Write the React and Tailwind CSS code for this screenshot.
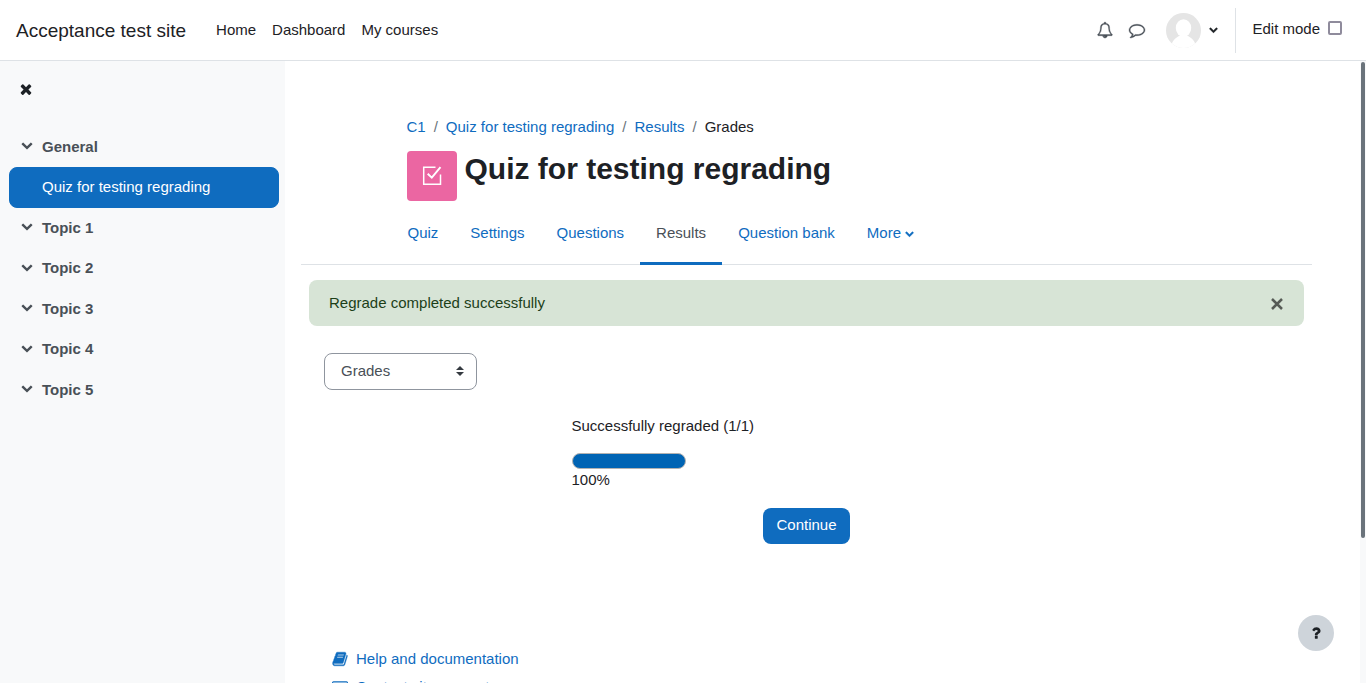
import React from "react";

const ICONS = {
  bell: "M912 1696q0-16-16-16-59 0-101.5-42.5t-42.5-101.5q0-16-16-16t-16 16q0 73 51.5 124.5t124.5 51.5q16 0 16-16zm-666-288h1300q-266-300-266-832 0-51-24-105t-69-103-121.5-80.5-169.5-31.5-169.5 31.5-121.5 80.5-69 103-24 105q0 532-266 832zm1482 0q0 52-38 90t-90 38h-448q0 106-75 181t-181 75-181-75-75-181h-448q-52 0-90-38t-38-90q50-42 91-88t85-119.500 74.500-158.500 50-206 19.500-260q0-152 117-282.500t307-158.500q-8-19-8-39 0-40 28-68t68-28 68 28 28 68q0 20-8 39 190 28 307 158.500t117 282.500q0 139 19.500 260t50 206 74.500 158.500 85 119.500 91 88z",
  comment: "M896 384q-204 0-381.500 69.500t-282 187.500-104.500 255q0 112 71.500 213.500t201.500 175.500l87 50-27 96q-24 91-70 172 152-63 275-171l43-38 57 6q69 8 130 8 204 0 381.500-69.500t282-187.500 104.500-255-104.500-255-282-187.500-381.500-69.500zm896 512q0 174-120 321.500t-326 233-450 85.500q-70 0-145-8-198 175-460 242-49 14-114 22h-5q-15 0-27-10.500t-16-27.500v-1q-3-4-.5-12t2-10 4.500-9.500l6-9 7-8.500 8-9q7-8 31-34.500t34.500-38 31-39.500 32.500-51 27-59 26-76q-157-89-247.500-220t-90.500-281q0-174 120-321.500t326-233 450-85.500 450 85.500 326 233 120 321.500z",
  chevron: "M1683 808l-742 741q-19 19-45 19t-45-19l-742-741q-19-19-19-45.500t19-45.500l166-165q19-19 45-19t45 19l531 531 531-531q19-19 45-19t45 19l166 165q19 19 19 45.500t-19 45.500z",
  times: "M1490 1322q0 40-28 68l-136 136q-28 28-68 28t-68-28l-294-294-294 294q-28 28-68 28t-68-28l-136-136q-28-28-28-68t28-68l294-294-294-294q-28-28-28-68t28-68l136-136q28-28 68-28t68 28l294 294 294-294q28-28 68-28t68 28l136 136q28 28 28 68t-28 68l-294 294 294 294q28 28 28 68z",
  book: "M1703 478q40 57 18 129l-275 906q-19 64-76.500 107.500t-122.500 43.500h-923q-77 0-148.500-53.500t-99.500-131.500q-24-67-2-127 0-4 3-27t4-37q1-8-3-21.500t-3-19.500q2-11 8-21t16.500-23.500 16.500-23.500q23-38 45-91.500t30-91.500q3-10 .5-30t-.5-28q3-11 17-28t17-23q21-36 42-92t25-90q1-9-2.500-32t.5-28q4-13 22-30.500t22-22.500q19-26 42.500-84.500t27.500-96.500q1-8-3-25.500t-2-26.500q2-8 9-18t18-23 17-21q8-12 16.500-30.500t15-35 16-36 19.500-32 26.500-23.500 36-11.500 47.500 5.500l-1 3q38-9 51-9h761q74 0 114 56t18 130l-274 906q-36 119-71.500 153.500t-128.500 34.500h-869q-27 0-38 15-11 16-1 43 24 70 144 70h923q29 0 56-15.500t35-41.500l300-987q7-22 5-57 38 15 59 43zm-1064 2q-4 13 2 22.500t20 9.500h608q13 0 25.500-9.500t16.500-22.500l21-64q4-13-2-22.500t-20-9.500h-608q-13 0-25.500 9.500t-16.500 22.500zm-83 256q-4 13 2 22.500t20 9.500h608q13 0 25.500-9.500t16.500-22.500l21-64q4-13-2-22.500t-20-9.500h-608q-13 0-25.500 9.500t-16.500 22.500z",
  envelope: "M1664 1504v-768q-32 36-69 66-268 206-426 338-51 43-83 67t-86.500 48.500-102.500 24.500h-2q-48 0-102.500-24.500t-86.500-48.500-83-67q-158-132-426-338-37-30-69-66v768q0 13 9.500 22.500t22.500 9.500h1472q13 0 22.500-9.500t9.500-22.500zm0-1051v-24.500l-.5-13-3-12.500-5.500-9-9-7.500-14-2.500h-1472q-13 0-22.500 9.500t-9.500 22.500q0 168 147 284 193 152 401 317 6 5 35 29.500t46 37.500 44.500 31.500 50.500 27.500 43 9h2q20 0 43-9t50.500-27.500 44.500-31.500 46-37.500 35-29.500q208-165 401-317 54-43 100.500-115.500t46.500-131.500zm128-37v1088q0 66-47 113t-113 47h-1472q-66 0-113-47t-47-113v-1088q0-66 47-113t113-47h1472q66 0 113 47t47 113z",
  question: "M1088 1256v240q0 16-12 28t-28 12h-240q-16 0-28-12t-12-28v-240q0-16 12-28t28-12h240q16 0 28 12t12 28zm316-600q0 54-15.500 101t-35 76.500-55 59.500-57.500 43.500-61 35.500q-41 23-68.500 65t-27.500 67q0 17-12 32.500t-28 15.500h-240q-15 0-25.500-18.500t-10.500-37.500v-45q0-83 65-156.500t143-108.500q59-27 84-56t25-76q0-42-46.500-74t-107.500-32q-65 0-108 29-35 25-107 115-13 16-31 16-12 0-25-8l-164-125q-13-10-15.500-25t5.500-28q160-266 464-266 80 0 161 31t146 83 106 127.500 41 158.500z",
};

function Icon({ name, className, weight = 0 }) {
  return (
    <svg
      viewBox="0 0 1792 1792"
      fill="currentColor"
      stroke="currentColor"
      strokeWidth={weight}
      overflow="visible"
      aria-hidden="true"
      className={className}
    >
      <path d={ICONS[name]} />
    </svg>
  );
}

const TOPICS = ["Topic 1", "Topic 2", "Topic 3", "Topic 4", "Topic 5"];
const CRUMBS = ["C1", "Quiz for testing regrading", "Results"];
const TABS = ["Quiz", "Settings", "Questions", "Results", "Question bank"];

function Header() {
  return (
    <header className="flex h-[61px] shrink-0 items-center border-b border-[#dee2e6] bg-white px-4">
      <a href="#" className="mr-[22px] pt-0.5 text-[19px]">Acceptance test site</a>
      <nav aria-label="Site" className="flex">
        {["Home", "Dashboard", "My courses"].map((t) => (
          <a key={t} href="#" className="px-2">{t}</a>
        ))}
      </nav>
      <div className="ml-auto flex items-center">
        <button type="button" aria-label="Notifications" className="px-2 text-[#495057]">
          <Icon name="bell" weight={40} className="size-4" />
        </button>
        <button type="button" aria-label="Messages" className="px-2 text-[#495057]">
          <Icon name="comment" weight={40} className="size-4" />
        </button>
        <button type="button" aria-label="User menu" className="ml-[13px] flex items-center gap-2">
          <svg viewBox="0 0 35 35" aria-hidden="true" className="size-[35px] rounded-full">
            <rect width="35" height="35" fill="#e5e5e5" />
            <ellipse cx="17.500" cy="15" rx="7.700" ry="8.700" fill="#fff" />
            <path d="M4.500 35C6 27 10 24.500 14 22.500h7C25 24.500 29 27 30.500 35z" fill="#fff" />
          </svg>
          <Icon name="chevron" weight={60} className="mb-0.5 size-[9px]" />
        </button>
        <div className="ml-[17px] flex h-[45px] items-center border-l border-[#dee2e6] pr-2 pl-4">
          <label htmlFor="editmode" className="pb-px">Edit mode</label>
          <input
            id="editmode"
            type="checkbox"
            className="mb-1 ml-2 size-[14px] appearance-none rounded-[2px] border-2 border-[#8f8b9c] bg-white checked:bg-[#0f6cbf]"
          />
        </div>
      </div>
    </header>
  );
}

function Section({ title }) {
  return (
    <li className="flex items-center border border-transparent py-2 pl-3 font-bold text-[#495057]">
      <button type="button" aria-label={"Collapse " + title} className="mr-[9px] mb-[3px]">
        <Icon name="chevron" className="size-3" />
      </button>
      <a href="#">{title}</a>
    </li>
  );
}

function Sidebar() {
  return (
    <nav aria-label="Course index" className="w-[285px] shrink-0 overflow-y-auto bg-[#f8f9fa] pr-[6px] pl-2 [scrollbar-width:none]">
      <button type="button" aria-label="Close course index" className="mt-[17px] ml-[10px] flex h-[1.5em] items-center">
        <Icon name="times" className="size-4" />
      </button>
      <ul className="mt-[26px]">
        <Section title="General" />
        <li className="ml-px rounded-lg border border-[#0f6cbf] bg-[#0f6cbf] py-2 pl-8 text-white">
          <a href="#">Quiz for testing regrading</a>
        </li>
        {TOPICS.map((t) => <Section key={t} title={t} />)}
      </ul>
    </nav>
  );
}

export default function App() {
  return (
    <div className="flex h-screen flex-col overflow-hidden bg-white font-['Liberation_Sans',Arial,sans-serif] text-[15px] leading-normal text-[#1d2125]">
      <Header />
      <div className="flex min-h-0 flex-1">
        <Sidebar />
        <main className="min-w-0 flex-1 overflow-y-auto pr-12 pl-4 [scrollbar-width:none]">
          <div className="mx-auto max-w-[800px] pt-[55px]">
            <nav aria-label="Breadcrumb">
              <ol className="flex flex-wrap text-[#0f6cbf]">
                {CRUMBS.map((c) => (
                  <li key={c}>
                    <a href="#">{c}</a>
                    <span className="px-2 text-[#6a737b]">/</span>
                  </li>
                ))}
                <li aria-current="page" className="text-[#1d2125]">Grades</li>
              </ol>
            </nav>
            <div className="mt-3 flex gap-2">
              <div className="flex size-[50px] items-center justify-center rounded bg-[#eb66a2]">
                <svg viewBox="0 0 24 24" fill="none" stroke="#fff" aria-hidden="true" className="size-6">
                  <path d="M15.500 3.200H3.700V20.200H20.500V10.500" strokeWidth="1.500" />
                  <path d="M7.700 9.700L11.800 13.600L20.500 3.200" strokeWidth="1.900" />
                </svg>
              </div>
              <h1 className="text-[30px] leading-9 font-bold">Quiz for testing regrading</h1>
            </div>
          </div>
          <div className="mt-[3px] border-b border-[#dee2e6]">
            <nav aria-label="Quiz navigation" className="mx-auto -mb-px flex max-w-[830px] text-[#0f6cbf]">
              {TABS.map((t) => (
                <a
                  key={t}
                  href="#"
                  className={
                    t === "Results"
                      ? "flex h-[61px] items-center border-b-[3px] border-[#0f6cbf] px-4 pt-0.5 text-[#495057]"
                      : "flex h-[61px] items-center border-b-[3px] border-transparent px-4 pt-0.5"
                  }
                >
                  {t}
                </a>
              ))}
              <button type="button" className="flex h-[61px] items-center gap-1 border-b-[3px] border-transparent px-4 pt-0.5">
                More
                <Icon name="chevron" weight={60} className="size-[9px]" />
              </button>
            </nav>
          </div>
          <div role="alert" className="mx-2 mt-[15px] flex h-[46px] items-center justify-between rounded-lg bg-[#d7e4d6] px-5 pt-0.5 text-[#1c3f19]">
            Regrade completed successfully
            <button type="button" aria-label="Dismiss" className="p-px text-[#565b56]">
              <svg viewBox="0 0 12 12" fill="none" stroke="currentColor" strokeWidth="2.500" aria-hidden="true" className="size-3">
                <path d="M1 1L11 11M11 1L1 11" />
              </svg>
            </button>
          </div>
          <div className="relative mt-[27px] ml-[23px] w-[153px]">
            <select
              aria-label="Report"
              className="block h-[37px] w-full appearance-none rounded-lg border border-[#8f959e] bg-white px-4 text-[#495057]"
            >
              <option>Grades</option>
            </select>
            <svg viewBox="0 0 8 10" fill="#343a40" aria-hidden="true" className="pointer-events-none absolute top-[13px] right-[13px] h-[10px] w-2">
              <path d="M4 0L0 4h8zM4 10L0 6h8z" />
            </svg>
          </div>
          <div className="mx-auto mt-[25px] max-w-[470px]">
            <p>Successfully regraded (1/1)</p>
            <div
              role="progressbar"
              aria-label="Regrade progress"
              aria-valuenow={100}
              className="mt-4 h-4 w-[114px] overflow-hidden rounded-full border border-[#b2b2b2] bg-[#0064b4]"
            />
            <p>100%</p>
          </div>
          <div className="mt-4 flex justify-center">
            <button type="button" className="h-9 rounded-lg bg-[#0f6cbf] px-[13px] text-white">Continue</button>
          </div>
          <footer className="mt-[104px] ml-[31px] flex flex-col items-start gap-[6px] pb-6 text-[#0f6cbf]">
            <a href="#" className="flex items-center gap-2">
              <Icon name="book" weight={40} className="size-4" />
              Help and documentation
            </a>
            <a href="#" className="flex items-center gap-2">
              <Icon name="envelope" className="size-4" />
              Contact site support
            </a>
          </footer>
        </main>
        <div aria-hidden="true" className="w-[6px] shrink-0 bg-[#f8f9fa] px-px pt-px">
          <div className="h-[calc(77%-2px)] rounded-full bg-[#6a737b]" />
        </div>
      </div>
      <button
        type="button"
        aria-label="Show footer"
        className="fixed right-8 bottom-8 flex size-9 items-center justify-center rounded-full bg-[#ced4da]"
      >
        <Icon name="question" className="size-4" />
      </button>
    </div>
  );
}
